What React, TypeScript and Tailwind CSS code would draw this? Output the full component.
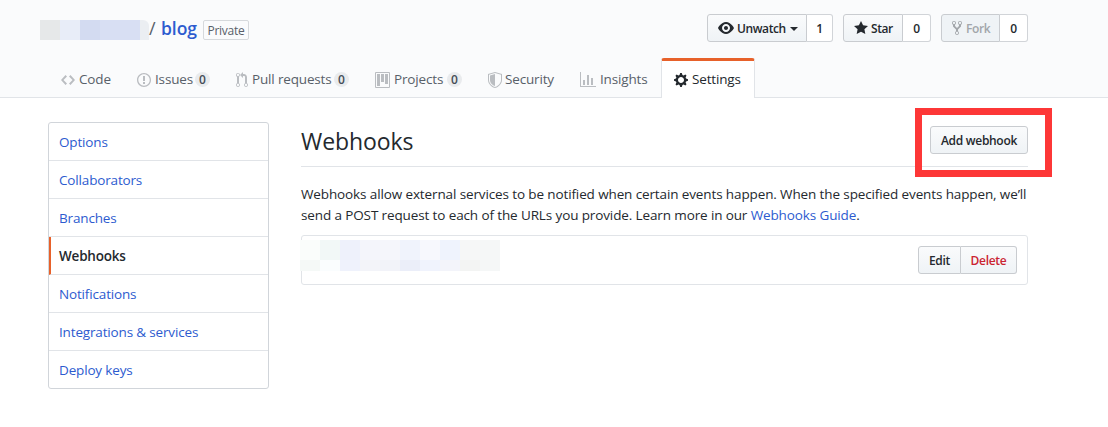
import type { ReactNode } from "react";

const icons = {
  eye: { w: 16, d: "M8.06 2C3 2 0 8 0 8s3 6 8.06 6C13 14 16 8 16 8s-3-6-7.94-6zM8 12c-2.2 0-4-1.78-4-4 0-2.2 1.8-4 4-4 2.22 0 4 1.8 4 4 0 2.22-1.78 4-4 4zm2-4c0 1.11-.89 2-2 2-1.11 0-2-.89-2-2 0-1.11.89-2 2-2 1.11 0 2 .89 2 2z" },
  star: { w: 14, d: "M14 6l-4.9-.64L7 1 4.9 5.36 0 6l3.6 3.26L2.67 14 7 11.67 11.33 14l-.93-4.74L14 6z" },
  fork: { w: 10, d: "M8 1a1.993 1.993 0 0 0-1 3.72V6L5 8 3 6V4.72A1.993 1.993 0 0 0 2 1a1.993 1.993 0 0 0-1 3.72V6.5l3 3v1.78A1.993 1.993 0 0 0 5 15a1.993 1.993 0 0 0 1-3.72V9.5l3-3V4.72A1.993 1.993 0 0 0 8 1zM2 4.2C1.34 4.2.8 3.65.8 3c0-.65.55-1.2 1.2-1.2.65 0 1.2.55 1.2 1.2 0 .65-.55 1.2-1.2 1.2zm3 10c-.66 0-1.2-.55-1.2-1.2 0-.65.55-1.2 1.2-1.2.65 0 1.2.55 1.2 1.2 0 .65-.55 1.2-1.2 1.2zm3-10c-.66 0-1.2-.55-1.2-1.2 0-.65.55-1.2 1.2-1.2.65 0 1.2.55 1.2 1.2 0 .65-.55 1.2-1.2 1.2z" },
  code: { w: 14, d: "M9.5 3L8 4.5 11.5 8 8 11.5 9.5 13 14 8 9.5 3zm-5 0L0 8l4.5 5L6 11.5 2.5 8 6 4.5 4.5 3z" },
  issue: { w: 14, d: "M7 2.3c3.14 0 5.7 2.56 5.7 5.7s-2.56 5.7-5.7 5.7A5.71 5.71 0 0 1 1.3 8c0-3.14 2.56-5.7 5.7-5.7zM7 1C3.14 1 0 4.14 0 8s3.14 7 7 7 7-3.14 7-7-3.14-7-7-7zm1 3H6v5h2V4zm0 6H6v2h2v-2z" },
  pull: { w: 12, d: "M11 11.28V5c-.03-.78-.34-1.47-.94-2.06C9.46 2.35 8.78 2.03 8 2H7V0L4 3l3 3V4h1c.27.02.48.11.69.31.21.2.3.42.31.69v6.28A1.993 1.993 0 0 0 10 15a1.993 1.993 0 0 0 1-3.72zm-1 2.92c-.66 0-1.2-.55-1.2-1.2 0-.65.55-1.2 1.2-1.2.65 0 1.2.55 1.2 1.2 0 .65-.55 1.2-1.2 1.2zM4 3c0-1.11-.89-2-2-2a1.993 1.993 0 0 0-1 3.72v6.56A1.993 1.993 0 0 0 2 15a1.993 1.993 0 0 0 1-3.72V4.72c.59-.34 1-.98 1-1.72zm-.8 10c0 .66-.55 1.2-1.2 1.2-.65 0-1.2-.55-1.2-1.2 0-.65.55-1.2 1.2-1.2.65 0 1.2.55 1.2 1.2zM2 4.2C1.34 4.2.8 3.65.8 3c0-.65.55-1.2 1.2-1.2.65 0 1.2.55 1.2 1.2 0 .65-.55 1.2-1.2 1.2z" },
  project: { w: 15, d: "M10 12h3V2h-3v10zm-4-2h3V2H6v8zm-4 4h3V2H2v12zm-1 1h13V1H1v14zM14 0H1a1 1 0 0 0-1 1v14a1 1 0 0 0 1 1h13a1 1 0 0 0 1-1V1a1 1 0 0 0-1-1z" },
  shield: { w: 14, d: "M0 2l7-2 7 2v6.02C14 12.69 8.69 16 7 16c-1.69 0-7-3.31-7-7.98V2zm1 .75L7 1l6 1.75v5.268C13 12.104 8.449 15 7 15c-1.449 0-6-2.896-6-6.982V2.75zm1 .75L7 2v12c-1.207 0-5-2.482-5-5.985V3.5z" },
  graph: { w: 16, d: "M16 14v1H0V0h1v14h15zM5 13H3V8h2v5zm4 0H7V3h2v10zm4 0h-2V6h2v7z" },
  gear: { w: 14, d: "M14 8.77v-1.6l-1.94-.64-.45-1.09.88-1.84-1.13-1.13-1.81.91-1.09-.45-.69-1.92h-1.6l-.63 1.94-1.11.45-1.84-.88-1.13 1.13.91 1.81-.45 1.09L0 7.23v1.59l1.94.64.45 1.09-.88 1.84 1.13 1.13 1.81-.91 1.09.45.69 1.92h1.59l.63-1.94 1.11-.45 1.84.88 1.13-1.13-.92-1.81.47-1.09L14 8.75v.02zM7 11c-1.66 0-3-1.34-3-3s1.34-3 3-3 3 1.34 3 3-1.34 3-3 3z" },
};

function Icon({ name, className = "" }: { name: keyof typeof icons; className?: string }) {
  const { w, d } = icons[name];
  return (
    <svg width={w} height={16} viewBox={`0 0 ${w} 16`} className={`shrink-0 ${className}`} fill="currentColor" aria-hidden="true">
      <path fillRule="evenodd" d={d} />
    </svg>
  );
}

function CountButton({ children, count, className, countClass, disabled }: { children: ReactNode; count: number; className: string; countClass: string; disabled?: boolean }) {
  return (
    <div className="flex h-7 text-xs font-semibold leading-[26px] tracking-[-0.4px]">
      <button disabled={disabled} className={`flex items-center rounded-l-[3px] border border-[#c9ccd0] ${disabled ? "bg-[#eff3f6] text-[#a2a6aa]" : "bg-linear-to-b from-[#fafbfc] to-[#eff3f6]"} ${className}`}>
        {children}
      </button>
      <span className={`rounded-r-[3px] border border-l-0 border-[#d1d4d8] bg-white pt-px text-center ${countClass}`}>{count}</span>
    </div>
  );
}

function Tab({ icon, label, count, className, gap }: { icon: keyof typeof icons; label: string; count?: number; className: string; gap: string }) {
  return (
    <a href="#" className={`flex items-center pt-[3px] text-[#586069] ${className}`}>
      <Icon name={icon} className="text-[#babdc1]" />
      <span className={gap}>{label}</span>
      {count !== undefined && (
        <span className="ml-auto h-[15px] w-[15px] rounded-full bg-[#e9ebed] text-center text-xs font-semibold leading-[15px] tracking-normal text-[#444d56]">{count}</span>
      )}
    </a>
  );
}

const menu = ["Options", "Collaborators", "Branches", "Webhooks", "Notifications", "Integrations & services", "Deploy keys"];

const topPixels = ["bg-[#fafdfb]", "bg-[#f2f8f7]", "bg-[#eef1fb]", "bg-[#f4f5fb]", "bg-[#f5f6fb]", "bg-[#f0f3fc]", "bg-[#f7f8fd]", "bg-[#eff3fd]", "bg-[#f6f7f7]", "bg-[#f5f7f7]"];
const bottomPixels = ["bg-[#f5f9f7]", "bg-[#fafdfe]", "bg-[#eff2fc]", "bg-[#f3f4f9]", "bg-[#f2f3f9]", "bg-[#ebeef9]", "bg-[#f0f3fd]", "bg-[#f3f4fa]", "bg-[#f3f4f3]", "bg-[#f5f7f7]"];

export default function App() {
  return (
    <div className="h-[427px] w-[1108px] overflow-hidden bg-white font-['Open_Sans','Noto_Sans',sans-serif] text-[13.5px] tracking-[-0.16px] text-[#24292e]">
      <header className="flex h-[98px] flex-col border-b border-[#e1e4e8] bg-[#fafbfc]">
        <div className="flex h-[58px] shrink-0 items-start justify-between pl-10 pr-20">
          <div className="flex pt-5">
            <div className="flex h-5 w-[109px] overflow-hidden rounded-tr-[6px]">
              <span className="w-5 bg-[#e6e8e9]" />
              <span className="w-5 bg-[#e8edf8]" />
              <span className="w-5 bg-[#d3dbf1]" />
              <span className="w-10 bg-[#d8dff3]" />
              <span className="flex-1 bg-[#ebeef2]" />
            </div>
            <span className="-mt-[5px] w-3 text-[18px] leading-[26px] text-[#586069]">/</span>
            <a href="#" className="-mt-[5px] w-[42px] text-[17.5px] font-semibold leading-[26px] tracking-[-0.05px] text-[#2d5bcf]">blog</a>
            <span className="h-5 w-[46px] rounded-[2px] border border-[#d6d9dc] pt-px text-center text-xs leading-[18px] tracking-[-0.25px] text-[#586069]">Private</span>
          </div>
          <div className="flex gap-2.5 pt-3.5">
            <CountButton count={1} className="w-[100px] pl-2.5" countClass="w-[26px]">
              <Icon name="eye" />
              <span className="ml-[3px] pt-px">Unwatch</span>
              <span className="ml-1 mt-0.5 border-x-4 border-t-4 border-x-transparent border-t-[#24292e]" />
            </CountButton>
            <CountButton count={0} className="w-[60px] pl-2.5" countClass="w-7">
              <Icon name="star" />
              <span className="ml-[3px] pt-px">Star</span>
            </CountButton>
            <CountButton count={0} className="w-[59px] pl-2.5" countClass="w-7" disabled>
              <Icon name="fork" />
              <span className="ml-1 pt-px">Fork</span>
            </CountButton>
          </div>
        </div>
        <nav className="flex h-10 shrink-0 pl-[61px]">
          <Tab icon="code" label="Code" className="mr-[26px] w-[50px]" gap="ml-1" />
          <Tab icon="issue" label="Issues" count={0} className="mr-[26px] w-[73px]" gap="ml-1" />
          <Tab icon="pull" label="Pull requests" count={0} className="mr-[26px] w-[113px]" gap="ml-1" />
          <Tab icon="project" label="Projects" count={0} className="mr-[26px] w-[87px]" gap="ml-1" />
          <Tab icon="shield" label="Security" className="mr-[26px] w-[66px]" gap="ml-[3px]" />
          <Tab icon="graph" label="Insights" className="w-[81px]" gap="ml-1" />
          <a href="#" className="flex w-[94px] items-center rounded-t-[3px] border-x border-t-[3px] border-x-[#e1e4e8] border-t-[#e7612a] bg-white pl-3">
            <Icon name="gear" />
            <span className="ml-1">Settings</span>
          </a>
        </nav>
      </header>

      <div className="flex pl-12 pt-6">
        <aside className="mr-8 h-[267px] w-[221px] shrink-0 overflow-hidden rounded-[3px] border border-[#d1d5da]">
          {menu.map((item) =>
            item === "Webhooks" ? (
              <a key={item} href="#" className="flex h-[38px] items-center border-b border-l-2 border-b-[#e1e4e8] border-l-[#e7612a] pl-2 pt-0.5 font-semibold tracking-[-0.2px]">{item}</a>
            ) : (
              <a key={item} href="#" className="flex h-[38px] items-center border-b border-[#e1e4e8] pl-2.5 pt-0.5 text-[#2d5bcf] last:border-b-0 last:pt-px">{item}</a>
            ),
          )}
        </aside>

        <main className="w-[727px] shrink-0">
          <div className="relative flex h-[45px] justify-between border-b border-[#e1e4e8]">
            <h1 className="text-[23px] leading-[39px] tracking-[-0.1px]">Webhooks</h1>
            <button className="mt-1 h-7 w-[98px] rounded-[3px] border border-[#c9ccd0] bg-linear-to-b from-[#fafbfc] to-[#eff3f6] pt-0.5 text-xs font-semibold tracking-[-0.3px]">Add webhook</button>
            <div className="pointer-events-none absolute -right-6 -top-3.5 h-[69px] w-[137px] border-[7px] border-[#fd3737]" />
          </div>
          <p className="mt-[17px] whitespace-nowrap leading-[21px] tracking-[-0.12px]">
            Webhooks allow external services to be notified when certain events happen. When the specified events happen, we’ll
            <br />
            send a POST request to each of the URLs you provide. Learn more in our <a href="#" className="text-[#2d5bcf]">Webhooks Guide</a>.
          </p>
          <section className="mt-[9px] flex h-[50px] items-start justify-between rounded-[3px] border border-[#e1e4e8] pr-2.5">
            <div className="-ml-0.5 mt-1">
              <div className="flex h-5">{topPixels.map((c, i) => <span key={i} className={`w-5 ${c}`} />)}</div>
              <div className="flex h-[11px]">{bottomPixels.map((c, i) => <span key={i} className={`w-5 ${c}`} />)}</div>
            </div>
            <div className="mt-2.5 flex h-7 text-xs font-semibold tracking-[-0.3px]">
              <button className="w-[43px] rounded-l-[3px] border border-[#c9ccd0] bg-linear-to-b from-[#fafbfc] to-[#eff3f6] pt-0.5">Edit</button>
              <button className="w-14 rounded-r-[3px] border border-l-0 border-[#c9ccd0] bg-linear-to-b from-[#fafbfc] to-[#eff3f6] pt-0.5 text-[#cb2431]">Delete</button>
            </div>
          </section>
        </main>
      </div>
    </div>
  );
}
